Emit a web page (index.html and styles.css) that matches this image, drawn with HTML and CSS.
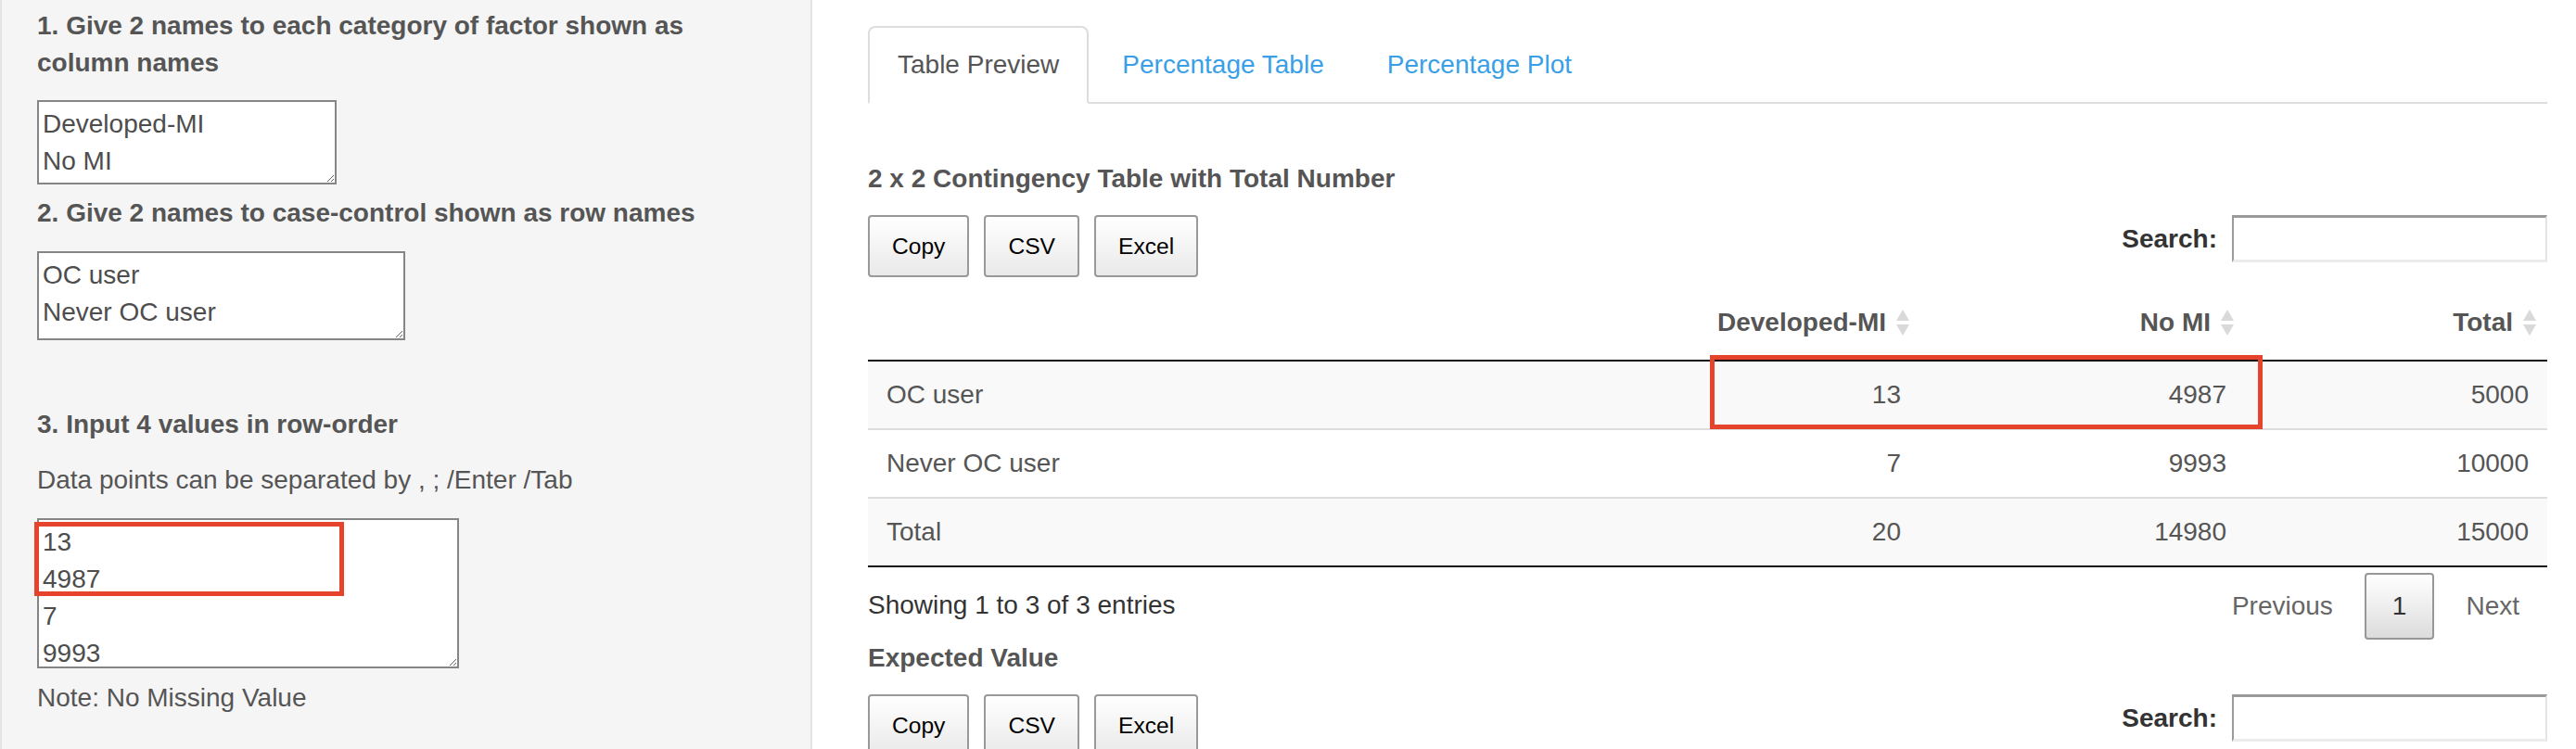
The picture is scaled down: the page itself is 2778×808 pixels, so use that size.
FILE: index.html
```html
<!DOCTYPE html>
<html lang="en">
<head>
<meta charset="utf-8">
<title>2 x 2 Contingency Table</title>
<link rel="stylesheet" href="styles.css">
</head>
<body>
<div class="page">
  <aside class="sidebar">
    <label class="ctl-label">1. Give 2 names to each category of factor shown as column names</label>
    <textarea class="ta ta-cols">Developed-MI
No MI</textarea>
    <label class="ctl-label label-rows">2. Give 2 names to case-control shown as row names</label>
    <textarea class="ta ta-rows">OC user
Never OC user</textarea>
    <label class="ctl-label label-values">3. Input 4 values in row-order</label>
    <p class="help">Data points can be separated by , ; /Enter /Tab</p>
    <textarea class="ta ta-values">13
4987
7
9993</textarea>
    <p class="note">Note: No Missing Value</p>
  </aside>

  <main class="main">
    <ul class="tabs">
      <li class="tab active"><a href="#">Table Preview</a></li>
      <li class="tab"><a href="#">Percentage Table</a></li>
      <li class="tab"><a href="#">Percentage Plot</a></li>
    </ul>

    <section class="panel">
      <div class="section-title first">2 x 2 Contingency Table with Total Number</div>
      <div class="toolbar">
        <div class="btns">
          <button class="dt-btn">Copy</button>
          <button class="dt-btn">CSV</button>
          <button class="dt-btn">Excel</button>
        </div>
        <label class="filter">Search:<input class="search" type="search"></label>
      </div>

      <table class="dt">
        <colgroup>
          <col class="col-name"><col class="col-a"><col class="col-b"><col class="col-c">
        </colgroup>
        <thead>
          <tr>
            <th class="th-blank"></th>
            <th>Developed-MI<svg class="sort" width="16" height="30" viewBox="0 0 16 30"><path d="M8 1 L15 13 H1 Z"/><path d="M1 17 H15 L8 29 Z"/></svg></th>
            <th>No MI<svg class="sort" width="16" height="30" viewBox="0 0 16 30"><path d="M8 1 L15 13 H1 Z"/><path d="M1 17 H15 L8 29 Z"/></svg></th>
            <th>Total<svg class="sort" width="16" height="30" viewBox="0 0 16 30"><path d="M8 1 L15 13 H1 Z"/><path d="M1 17 H15 L8 29 Z"/></svg></th>
          </tr>
        </thead>
        <tbody>
          <tr class="odd"><td class="rowname">OC user</td><td>13</td><td>4987</td><td>5000</td></tr>
          <tr class="even"><td class="rowname">Never OC user</td><td>7</td><td>9993</td><td>10000</td></tr>
          <tr class="odd"><td class="rowname">Total</td><td>20</td><td>14980</td><td>15000</td></tr>
        </tbody>
      </table>

      <div class="dt-foot">
        <div class="info">Showing 1 to 3 of 3 entries</div>
        <div class="paginate">
          <span class="pg disabled">Previous</span>
          <span class="pg current">1</span>
          <span class="pg disabled">Next</span>
        </div>
      </div>

      <div class="section-title">Expected Value</div>
      <div class="toolbar">
        <div class="btns">
          <button class="dt-btn">Copy</button>
          <button class="dt-btn">CSV</button>
          <button class="dt-btn">Excel</button>
        </div>
        <label class="filter">Search:<input class="search" type="search"></label>
      </div>
    </section>
  </main>

  <div class="mark mark-input"></div>
  <div class="mark mark-table"></div>
</div>
</body>
</html>
```

FILE: styles.css
```css
html, body {
  margin: 0;
  padding: 0;
  overflow: hidden;
}

body {
  font-family: "Liberation Sans", Arial, Helvetica, sans-serif;
  font-size: 28px;
  line-height: 40px;
  color: #555;
  background: #fff;
}

.page {
  position: relative;
  display: flex;
  height: 808px;
  overflow: hidden;
}

/* ---------- sidebar ---------- */
.sidebar {
  box-sizing: border-box;
  flex: none;
  width: 876px;
  height: 808px;
  background: #f5f5f5;
  border-left: 2px solid #e3e3e3;
  border-right: 2px solid #e3e3e3;
  padding: 8px 38px 0;
}

.ctl-label {
  display: block;
  font-weight: bold;
}

.label-rows { margin-top: 11px; }
.label-values { margin-top: 71px; }

.help,
.note {
  margin: 0;
}

.help { margin-top: 20px; }
.note { margin-top: 12px; }

.ta {
  display: block;
  box-sizing: border-box;
  margin: 0;
  padding: 4px;
  border: 2px solid #858585;
  border-radius: 0;
  background: #fff;
  font-family: "Liberation Sans", Arial, Helvetica, sans-serif;
  font-size: 28px;
  line-height: 40px;
  color: #4d4d4d;
  resize: both;
  overflow: hidden;
}

.ta-cols { width: 323px; height: 91px; margin-top: 20px; }
.ta-rows { width: 397px; height: 96px; margin-top: 21px; }
.ta-values { width: 455px; height: 162px; margin-top: 21px; }

/* ---------- main ---------- */
.main {
  flex: none;
  width: 1811px;
  margin-left: 60px;
}

.tabs {
  display: flex;
  margin: 28px 0 0;
  padding: 0;
  list-style: none;
  border-bottom: 2px solid #ddd;
}

.tab {
  margin-bottom: -2px;
  margin-right: 4px;
}

.tab a {
  display: block;
  padding: 20px 30px;
  border: 2px solid transparent;
  border-radius: 8px 8px 0 0;
  color: #3a9fe6;
  text-decoration: none;
}

.tab.active a {
  color: #555;
  background: #fff;
  border-color: #ddd #ddd transparent;
}

.section-title {
  font-weight: bold;
}

.section-title.first { margin-top: 61px; }

.toolbar {
  display: flex;
  justify-content: space-between;
  align-items: flex-start;
  margin-top: 19px;
}

.btns {
  display: flex;
  gap: 16px;
}

.dt-btn {
  box-sizing: border-box;
  margin: 0;
  padding: 12px 24px;
  border: 2px solid #999;
  border-radius: 4px;
  background: linear-gradient(to bottom, #fff 0%, #e9e9e9 100%);
  font-family: "Liberation Sans", Arial, Helvetica, sans-serif;
  font-size: 24.6px;
  line-height: 39px;
  color: #000;
}

.filter {
  display: flex;
  align-items: center;
  font-weight: bold;
  color: #333;
}

.search {
  box-sizing: border-box;
  width: 340px;
  height: 51px;
  margin: 0 0 0 16px;
  padding: 0 6px;
  border-style: solid;
  border-width: 3px 2px 3px 2px;
  border-color: #9a9a9a #e4e4e4 #ececec #9a9a9a;
  background: #fff;
  font-family: "Liberation Sans", Arial, Helvetica, sans-serif;
  font-size: 28px;
}

/* ---------- table ---------- */
.dt {
  width: 1811px;
  table-layout: fixed;
  border-collapse: separate;
  border-spacing: 0;
  margin-top: 9px;
  border-bottom: 2px solid #111;
}

.col-name { width: 880px; }
.col-a { width: 254px; }
.col-b { width: 351px; }
.col-c { width: 326px; }

.dt th {
  padding: 20px 11px 20px 36px;
  text-align: right;
  font-weight: bold;
  line-height: 40px;
  border-bottom: 2px solid #111;
  white-space: nowrap;
}

.sort {
  vertical-align: middle;
  margin-left: 10px;
  margin-top: -4px;
  fill: #d9d9d9;
}

.dt td {
  padding: 16px 20px;
  text-align: right;
  line-height: 40px;
}

.dt td.rowname { text-align: left; }

.dt tbody tr + tr td { border-top: 2px solid #ddd; }

.dt tbody tr.odd td { background: #f9f9f9; }

/* ---------- footer ---------- */
.dt-foot {
  display: flex;
  justify-content: space-between;
  align-items: flex-start;
}

.info {
  padding-top: 21px;
  color: #333;
}

.paginate {
  display: flex;
  padding-top: 6px;
}

.pg {
  margin-left: 4px;
  padding: 14px 28px;
  border: 2px solid transparent;
  border-radius: 4px;
  color: #666;
}

.pg.current {
  color: #333;
  border-color: #979797;
  background: linear-gradient(to bottom, #fff 0%, #dcdcdc 100%);
}

/* ---------- annotation marks ---------- */
.mark {
  position: absolute;
  box-sizing: border-box;
  border: 5px solid #e5432b;
  pointer-events: none;
}

.mark-input {
  left: 37px;
  top: 563px;
  width: 334px;
  height: 80px;
}

.mark-table {
  left: 1844px;
  top: 383px;
  width: 596px;
  height: 80px;
}
```
